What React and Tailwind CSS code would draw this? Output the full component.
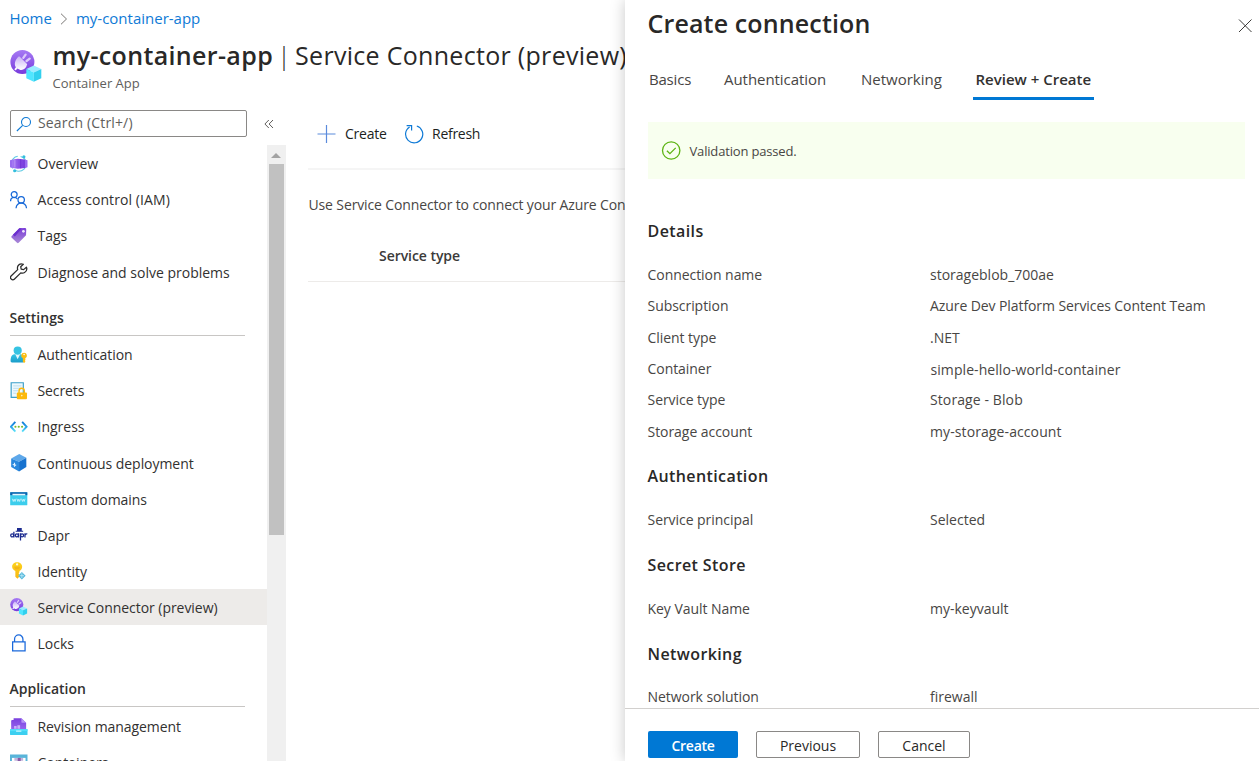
import React from "react";

const Svg = ({ children, className = "size-[17.500px]", viewBox = "0 0 18 18" }) => (
  <svg className={`shrink-0 ${className}`} viewBox={viewBox} fill="none" aria-hidden="true">
    {children}
  </svg>
);

const ConnectorIcon = ({ className, id }) => (
  <Svg className={className} viewBox="0 0 32 32">
    <defs>
      <linearGradient id={`${id}-ring`} x1="0" y1="0" x2="0" y2="1">
        <stop offset="0" stopColor="#a67af4" />
        <stop offset="1" stopColor="#773adc" />
      </linearGradient>
      <linearGradient id={`${id}-plug`} x1="0" y1="0" x2="0" y2="1">
        <stop offset="0" stopColor="#c9b2f6" />
        <stop offset="1" stopColor="#ffffff" />
      </linearGradient>
    </defs>
    <circle cx="12.400" cy="12" r="12" fill={`url(#${id}-ring)`} />
    <path d="M8.300 6.800c.5-.5 1-.5 1.500 0l7 7c.5.500.5 1 0 1.500-.5 2.900-3.300 5-6.300 4.600-1.200-.1-2.200-.6-3-1.300L6 20c-.9.600-1.900-.3-1.300-1.200l1.200-1.600c-2.200-3-.6-7.400 2.400-10.400z" fill={`url(#${id}-plug)`} />
    <path d="M13.300 7.800l2.300-3.200M16.500 11l3.200-2.400" stroke="#dccbfa" strokeWidth="2.300" strokeLinecap="round" />
    <path d="M16.300 19l7.500-3.500 7.500 3.500-7.500 3.400z" fill="#9cebff" />
    <path d="M16.300 19l7.500 3.400v9.400l-7.500-3.500z" fill="#50e6ff" />
    <path d="M31.300 19l-7.500 3.400v9.400l7.500-3.500z" fill="#32d0ee" />
  </Svg>
);

const OverviewIcon = () => (
  <Svg>
    <defs>
      <linearGradient id="ov" x1="0" x2="1">
        <stop offset="0" stopColor="#a67af4" />
        <stop offset=".5" stopColor="#8a52e6" />
        <stop offset="1" stopColor="#773adc" />
      </linearGradient>
    </defs>
    <circle cx="9" cy="9" r="7.700" stroke="#5fcbe3" strokeWidth="1.100" strokeDasharray="16 3" />
    <path d="M0 5.500l3-1v9l-3-1zM18 5.500l-3-1v9l3-1z" fill="#9a6cf0" />
    <path d="M2.600 4.600L8 3.800v10.400l-5.400-.8zM15.400 4.600L8 3.800v10.400l7.400-.8z" fill="url(#ov)" />
    <path d="M5 5.200v7.600" stroke="#c9abf8" strokeWidth=".7" />
    <path d="M11 4.200v9.600" stroke="#6a2bd0" strokeWidth=".7" />
    <circle cx="14.300" cy="1.900" r="1.600" fill="#32bedd" />
    <circle cx="4.800" cy="16.200" r="1.600" fill="#32bedd" />
  </Svg>
);

const AccessIcon = () => (
  <Svg>
    <g stroke="#1668d8" strokeWidth="1.300">
      <circle cx="4.300" cy="3.700" r="3" />
      <path d="M.6 10.500c0-2.600 1.600-3.900 3.700-3.900 1.400 0 2.500.5 3.200 1.500" />
      <circle cx="11.500" cy="9" r="3.300" />
      <path d="M6.200 17.800c.3-3.300 2.300-5.300 5.300-5.300s5.200 2 5.500 5.300" />
    </g>
  </Svg>
);

const TagIcon = () => (
  <Svg>
    <defs>
      <linearGradient id="tag" x1="0" y1="0" x2="0" y2="1">
        <stop offset="0" stopColor="#7a3bd8" />
        <stop offset="1" stopColor="#a98ad6" />
      </linearGradient>
    </defs>
    <path d="M9.600 1.200l5.600-.2c1 0 1.500.6 1.500 1.500l-.2 6-7.600 7.800c-.6.5-1.200.5-1.700 0L1.800 11c-.6-.6-.6-1.200 0-1.800z" fill="url(#tag)" />
    <path d="M9.600 1.200L3 8l2 1.800 7.200-8.600z" fill="#6c30cf" />
    <circle cx="13.800" cy="4.400" r="1.400" fill="#f0e6fb" />
  </Svg>
);

const WrenchIcon = () => (
  <Svg>
    <path
      d="M16.900 4.300l-2.900 2.500-2.500-.5-.5-2.500 2.700-2.500C11.500.4 9.200 1.200 8.200 3c-.7 1.300-.7 2.500-.3 3.800L1.100 13.400a2 2 0 000 2.900l.4.4a2 2 0 002.900 0l6.700-6.500c1.300.5 2.700.4 3.900-.4 1.900-1.200 2.700-3.500 1.900-5.500z"
      stroke="#2b2b2b"
      strokeWidth="1.300"
      strokeLinejoin="round"
    />
  </Svg>
);

const UserKeyIcon = () => (
  <Svg>
    <defs>
      <linearGradient id="usr" x1="0" y1="0" x2="0" y2="1">
        <stop offset="0" stopColor="#35c5e6" />
        <stop offset="1" stopColor="#1a9cc9" />
      </linearGradient>
    </defs>
    <path d="M.6 15.500c0-4.500 1.200-7 4.600-7h5c3.400 0 4.600 2.500 4.600 7 0 .9-.5 1.400-1.400 1.400H2c-.9 0-1.400-.5-1.400-1.400z" fill="url(#usr)" />
    <path d="M5.400 8.500h5l-2.500 5z" fill="#e4f8fd" />
    <circle cx="7.900" cy="4.700" r="4.200" fill="#36c3e2" />
    <path d="M14.500 7a3 3 0 00-1.300 5.700v3.400l1.300 1.300 1.400-1.300-.6-.9.600-.8-.2-1.700a3 3 0 00-1.200-5.700z" fill="#fbbd13" />
    <circle cx="14.500" cy="8.700" r=".8" fill="#fff" />
  </Svg>
);

const SecretsIcon = () => (
  <Svg>
    <path d="M1.200.8h12.500v15H1.200z" fill="#eef8fc" stroke="#3b9fc9" strokeWidth="1.200" />
    <path d="M3.300 4h8.400M3.300 6.500h8.400M3.300 9h5M3.300 11.500h3" stroke="#b5d9ec" strokeWidth=".9" />
    <path d="M9.300 11.500V9.200a2.700 2.700 0 015.400 0v2.300" stroke="#fbb80c" strokeWidth="1.500" />
    <rect x="7" y="10.800" width="10.500" height="7" rx="1" fill="#fcb90c" />
    <circle cx="12.100" cy="14" r=".8" fill="#fff3cc" />
  </Svg>
);

const IngressIcon = () => (
  <Svg>
    <defs>
      <linearGradient id="ing" x1="0" y1="0" x2="0" y2="1">
        <stop offset="0" stopColor="#0f7bd8" />
        <stop offset=".55" stopColor="#2ba5e8" />
        <stop offset="1" stopColor="#5fe4fa" />
      </linearGradient>
    </defs>
    <path d="M5.500 4L.9 9l4.600 5M12.500 4l4.600 5-4.600 5" stroke="url(#ing)" strokeWidth="1.900" />
    <circle cx="5.600" cy="9" r="1.100" fill="#76bc2d" />
    <circle cx="9" cy="9" r="1.100" fill="#76bc2d" />
    <circle cx="12.400" cy="9" r="1.100" fill="#76bc2d" />
  </Svg>
);

const DeployIcon = () => (
  <Svg>
    <path d="M9.500 0l7.300 3.800-7.500 4.200L1.200 4.600z" fill="#5ea8ea" />
    <path d="M1.200 4.600L9.300 8v10l-8.100-4.600z" fill="#2a88dd" />
    <path d="M16.800 3.800L9.300 8v10l7.500-4.600z" fill="#1672cf" />
    <path d="M4.600 9v4.200M2.800 10.800l3.600.8" stroke="#e6f4ff" strokeWidth="1.200" />
  </Svg>
);

const DomainsIcon = () => (
  <Svg>
    <rect x=".2" y="2.300" width="17.600" height="13.500" rx=".6" fill="#3ccdec" />
    <path d="M.2 2.300h17.600v3H.2z" fill="#0b62ad" />
    <path d="M2.500 3.900h13.200v1.600H2.500z" fill="#e2f6fc" />
    <path d="M2.500 9l.9 2.800.9-2.300.9 2.300.9-2.800M7.200 9l.9 2.800.9-2.300.9 2.300.9-2.800M11.900 9l.9 2.800.9-2.300.9 2.300.9-2.800" stroke="#d9f8ff" strokeWidth=".8" />
  </Svg>
);

const DaprIcon = () => (
  <Svg>
    <path d="M7.200 2h4.900v2.900h1.400v1.100H5.800V4.900h1.400z" fill="#1b2a8f" />
    <g stroke="#1b2a8f" strokeWidth="1.300">
      <circle cx="2.300" cy="9.600" r="1.600" />
      <path d="M4 5.800v6" />
      <circle cx="7.100" cy="9.600" r="1.600" />
      <path d="M8.800 7.500v4.300" />
      <circle cx="12.400" cy="9.600" r="1.600" />
      <path d="M10.800 7.500v7.300M15.400 11.800V7.500M15.500 9.300c.2-1 1-1.400 2.300-1.200" />
    </g>
  </Svg>
);

const IdentityIcon = () => (
  <Svg>
    <defs>
      <linearGradient id="idk" x1="0" y1="0" x2="0" y2="1">
        <stop offset="0" stopColor="#fdd21c" />
        <stop offset="1" stopColor="#f8b714" />
      </linearGradient>
    </defs>
    <path d="M7.300.3c3 0 5.200 2 5.200 4.700 0 2-1 3.500-2.800 4.200v1.300l-.9 1 .9 1.100-.9 1.200.9 1.100-2 2.300-2.200-2V9.300C3.800 8.600 2.200 7 2.200 5c0-2.700 2.100-4.700 5.100-4.700z" fill="url(#idk)" />
    <path d="M4.500 5.400h5.600M5 6.900h4.600" stroke="#e9a414" strokeWidth=".7" />
    <circle cx="7.300" cy="2.500" r="1.200" fill="#fff8dd" />
    <path d="M12.200 10.200l3.900 3.900-3.900 3.800-3.900-3.800z" fill="#57b9dc" />
    <path d="M12.200 11.600v5M10 14.100h4.400" stroke="#c4ecf8" strokeWidth=".8" />
  </Svg>
);

const LockIcon = () => (
  <Svg>
    <path d="M4.700 8V5.300a4.300 4.300 0 018.600 0V8M2.700 8h12.800v9.300H2.700z" stroke="#1a69dc" strokeWidth="1.300" />
  </Svg>
);

const RevisionIcon = () => (
  <Svg>
    <defs>
      <linearGradient id="rev" x1="0" y1="0" x2="0" y2="1">
        <stop offset="0" stopColor="#7a3fde" />
        <stop offset="1" stopColor="#9767ee" />
      </linearGradient>
    </defs>
    <path d="M3.700.2h8L16.600 5v7H1.200V3c0-.6.400-1 1-1h1.500z" fill="url(#rev)" />
    <path d="M11.700.2V4c0 .6.400 1 1 1h3.900z" fill="#b796f9" />
    <path d="M4.200 8.300h2.600V11H4.200zM7.600 7.500h2.800V11H7.600z" fill="#c9b0f8" />
    <path d="M0 11.500h18v6H.5a.5.500 0 01-.5-.5z" fill="#3ccff0" />
    <path d="M0 11.500h18v2H0z" fill="#50e0fa" />
    <path d="M6.300 12.900h5.400v1.200H6.300z" fill="#d8f9ff" />
  </Svg>
);

const ContainersIcon = () => (
  <Svg>
    <path d="M0 .5h18v17H0z" fill="#59b4d9" />
    <path d="M2 4h14v12H2z" fill="#fff" />
    <path d="M4.500 4h9v3h-2.500v7H7V7H4.500z" fill="#c4b4dc" />
    <path d="M8 4h3v9H8z" fill="#8a5aa5" />
  </Svg>
);

const NavItem = ({ icon, label, active, low, spacing = "" }) => (
  <li className={`flex h-9 items-center gap-2.5 pl-[10px] ${active ? "bg-[#edebe9]" : ""}`}>
    {icon}
    <a className={`whitespace-nowrap ${low ? "pt-0.5" : ""} ${spacing}`}>{label}</a>
  </li>
);

const NavHeading = ({ children }) => (
  <div className="mr-[22px] mb-px ml-[9.500px] flex h-[46px] items-end border-b border-[#c8c6c4] pb-[7px] font-semibold text-[#323130]">
    {children}
  </div>
);

const Sidebar = () => (
  <aside className="flex min-h-0 w-[286px] shrink-0 flex-col">
    <div className="flex h-9 items-start pl-[10px]">
      <div className="mt-[1px] flex h-[27px] w-[237px] items-center rounded-[2px] border border-[#8a8886] pl-[5px]">
        <Svg className="size-4" viewBox="0 0 16 16">
          <circle cx="10" cy="6" r="4.500" stroke="#0f7ad6" strokeWidth="1.100" />
          <path d="M6.700 9.300L.9 15" stroke="#0f7ad6" strokeWidth="1.100" />
        </Svg>
        <span className="mb-0.5 ml-[6px] tracking-[0.15px] text-[#605e5c]">Search (Ctrl+/)</span>
      </div>
      <Svg className="mt-[10px] ml-[16.500px] size-[10px]" viewBox="0 0 10 10">
        <path d="M4.800 1L.9 5l3.900 4M9 1L5.100 5 9 9" stroke="#605e5c" strokeWidth="1" />
      </Svg>
    </div>
    <div className="flex min-h-0 flex-1">
      <nav className="w-[267px] overflow-hidden">
        <ul className="pt-px">
          <NavItem icon={<OverviewIcon />} label="Overview" />
          <NavItem icon={<AccessIcon />} label="Access control (IAM)" spacing="tracking-[0.08px]" />
          <NavItem icon={<TagIcon />} label="Tags" />
          <NavItem icon={<WrenchIcon />} label="Diagnose and solve problems" low />
        </ul>
        <NavHeading>Settings</NavHeading>
        <ul>
          <NavItem icon={<UserKeyIcon />} label="Authentication" spacing="tracking-[-0.07px]" />
          <NavItem icon={<SecretsIcon />} label="Secrets" spacing="tracking-[-0.1px]" />
          <NavItem icon={<IngressIcon />} label="Ingress" />
          <NavItem icon={<DeployIcon />} label="Continuous deployment" spacing="tracking-[-0.05px]" low />
          <NavItem icon={<DomainsIcon />} label="Custom domains" spacing="tracking-[-0.1px]" low />
          <NavItem icon={<DaprIcon />} label="Dapr" low />
          <NavItem icon={<IdentityIcon />} label="Identity" low />
          <NavItem icon={<ConnectorIcon id="nav" className="size-[17.500px]" />} label="Service Connector (preview)" spacing="tracking-[-0.05px]" active low />
          <NavItem icon={<LockIcon />} label="Locks" low />
        </ul>
        <NavHeading>Application</NavHeading>
        <ul className="pt-px">
          <NavItem icon={<RevisionIcon />} label="Revision management" spacing="tracking-[-0.08px]" />
          <NavItem icon={<ContainersIcon />} label="Containers" />
        </ul>
      </nav>
      <div className="flex w-[19px] flex-col items-center bg-[#f0f0f0] pt-2">
        <div className="mr-px h-0 w-0 border-x-[5px] border-b-[5px] border-x-transparent border-b-[#a3a3a3]" />
        <div className="mt-[6px] mr-px h-[371px] w-[15px] bg-[#c1c1c1]" />
      </div>
    </div>
  </aside>
);

const Main = () => (
  <main className="ml-[22px] flex-1">
    <div className="flex h-[61px] items-center border-b-2 border-[#f5f5f5] pb-[10px] pl-2 text-[#201f1e]">
      <Svg className="size-[20px]" viewBox="0 0 20 20">
        <path d="M10.500 1v18M1.500 10h18" stroke="#5b8bdc" strokeWidth="1.200" />
      </Svg>
      <span className="ml-[9px] tracking-[-0.25px]">Create</span>
      <Svg className="ml-[17px] size-5" viewBox="0 0 20 20">
        <path d="M12.800 2A8.600 8.600 0 115.600 2.900M2.600 1.600h5v5" stroke="#0f7ad6" strokeWidth="1.200" />
      </Svg>
      <span className="ml-[8.500px] tracking-[-0.28px]">Refresh</span>
    </div>
    <p className="mt-[25px] ml-[0.500px] tracking-[-0.13px] whitespace-nowrap text-[#484644]">
      Use Service Connector to connect your Azure Container App to other services.
    </p>
    <div className="mt-[21px] flex h-[46px] border-b border-[#edebe9] pt-[10px] pl-[71px] font-semibold tracking-[-0.05px] text-[#3b3a39]">
      Service type
    </div>
  </main>
);

const Tab = ({ label, className = "" }) => (
  <span className={`shrink-0 whitespace-nowrap ${className}`}>{label}</span>
);

const Row = ({ label, value, low, className = "" }) => (
  <div className={`flex h-[31.400px] items-center ${low ? "pt-px" : ""}`}>
    <dt className="w-[282.500px] shrink-0 tracking-[-0.05px]">{label}</dt>
    <dd className={`whitespace-nowrap ${className}`}>{value}</dd>
  </div>
);

const Section = ({ title, className, children }) => (
  <section className={className}>
    <h3 className="mb-[17px] text-base leading-[22px] font-semibold tracking-[0.4px] text-[#292827]">{title}</h3>
    <dl>{children}</dl>
  </section>
);

const Drawer = () => (
  <div className="absolute inset-y-0 right-0 flex w-[634px] flex-col bg-white text-[#484644] shadow-[0_0_14px_rgba(0,0,0,0.22)]">
    <header className="flex h-[50px] shrink-0 items-start justify-between pr-[7px] pl-[22.500px]">
      <h2 className="mt-[6px] text-[25px] leading-[34px] font-semibold tracking-[0.140px] text-[#292827]">Create connection</h2>
      <Svg className="mt-[19px] size-[14px]" viewBox="0 0 14 14">
        <path d="M1 .5l12.500 12.500M13.500.5L1 13" stroke="#3b3a39" strokeWidth="1" />
      </Svg>
    </header>
    <div className="flex h-[50px] shrink-0 pl-6 text-[15px] leading-[58px]">
      <Tab label="Basics" className="w-[75px] tracking-[-0.2px]" />
      <Tab label="Authentication" className="w-[137px] tracking-[-0.05px]" />
      <Tab label="Networking" className="w-[112px]" />
      <Tab label="Review + Create" className="border-b-[3px] border-[#0078d4] px-[2.500px] font-semibold text-[#323130]" />
    </div>
    <div className="mt-[22px] mr-[14px] ml-[23px] flex h-[57px] shrink-0 items-center gap-[8.500px] bg-[#f8ffef] pl-[13px]">
      <Svg className="size-5" viewBox="0 0 20 20">
        <circle cx="10.200" cy="9.500" r="8.700" stroke="#5db413" strokeWidth="1.300" />
        <path d="M5.900 9.700l3 2.900 5.800-5.700" stroke="#5db413" strokeWidth="1.300" />
      </Svg>
      <span className="pt-0.5 text-[13px] tracking-[-0.17px]">Validation passed.</span>
    </div>
    <div className="min-h-0 flex-1 overflow-hidden pt-[41px] pl-[22.500px]">
      <Section title="Details">
        <Row label="Connection name" value="storageblob_700ae" />
        <Row label="Subscription" value="Azure Dev Platform Services Content Team" className="tracking-[-0.085px]" />
        <Row label="Client type" value=".NET" low />
        <Row label="Container" value="simple-hello-world-container" className="pt-0.5 pl-[0.500px] tracking-[0.076px]" />
        <Row label="Service type" value="Storage - Blob" className="tracking-[0.1px]" />
        <Row label="Storage account" value="my-storage-account" className="tracking-[0.1px]" />
      </Section>
      <Section title="Authentication" className="mt-[18px]">
        <Row label="Service principal" value="Selected" />
      </Section>
      <Section title="Secret Store" className="mt-[18.500px]">
        <Row label="Key Vault Name" value="my-keyvault" />
      </Section>
      <Section title="Networking" className="mt-[18.500px] [&>h3]:mb-4">
        <Row label="Network solution" value="firewall" />
      </Section>
    </div>
    <footer className="flex h-[53px] shrink-0 gap-[18px] border-t border-[#d2d0ce] pt-[22px] pl-[23px] font-medium text-[#292827]">
      <button className="h-[27px] w-[90px] rounded-[2px] bg-[#0078d4] pt-0.5 font-semibold tracking-[-0.28px] text-white">Create</button>
      <button className="h-[27px] w-[104px] rounded-[2px] border border-[#8a8886] pt-0.5">Previous</button>
      <button className="h-[27px] w-[92px] rounded-[2px] border border-[#8a8886] pt-0.5">Cancel</button>
    </footer>
  </div>
);

export default function App() {
  return (
    <div className="relative flex h-[761px] w-[1259px] flex-col overflow-hidden bg-white font-['Open_Sans','Noto_Sans',sans-serif] text-sm text-[#323130]">
      <div className="flex h-[38px] shrink-0 items-center pl-[9.500px] text-[15px] text-[#0f7ad6]">
        <span>Home</span>
        <Svg className="mr-[8px] ml-[8px] h-3 w-[8px]" viewBox="0 0 8 12">
          <path d="M1 .7L6.500 6 1 11.300" stroke="#797775" strokeWidth="1" />
        </Svg>
        <span>my-container-app</span>
      </div>
      <header className="flex h-[71px] shrink-0 items-start pl-[10px] text-[#292827]">
        <ConnectorIcon id="page" className="mt-3 size-8" />
        <div className="ml-[10.500px]">
          <h1 className="flex text-[25px] leading-[34px] whitespace-nowrap">
            <span className="font-semibold tracking-[0.350px]">my-container-app</span>
            <span className="w-[22px] text-center font-light">|</span>
            <span className="tracking-[0.300px]">Service Connector (preview)</span>
          </h1>
          <p className="mt-[2px] text-[13px] leading-[18px] text-[#605e5c]">Container App</p>
        </div>
      </header>
      <div className="flex min-h-0 flex-1">
        <Sidebar />
        <Main />
      </div>
      <Drawer />
    </div>
  );
}
